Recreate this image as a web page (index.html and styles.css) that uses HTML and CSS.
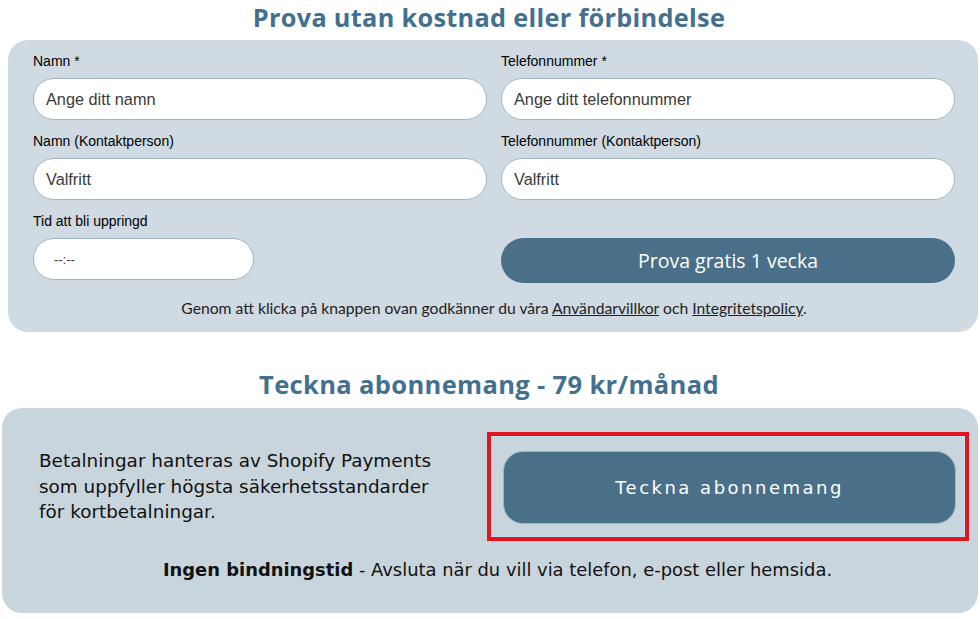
FILE: index.html
```html
<!DOCTYPE html>
<html lang="sv">
<head>
<meta charset="utf-8">
<title>Prova utan kostnad</title>
<link rel="stylesheet" href="styles.css">
</head>
<body>
<main class="page">
  <h2 class="title">Prova utan kostnad eller förbindelse</h2>
  <section class="card trial">
    <form class="form-grid">
      <div class="field">
        <label class="label">Namn *</label>
        <input class="input" type="text" placeholder="Ange ditt namn">
      </div>
      <div class="field">
        <label class="label">Telefonnummer *</label>
        <input class="input" type="text" placeholder="Ange ditt telefonnummer">
      </div>
      <div class="field">
        <label class="label">Namn (Kontaktperson)</label>
        <input class="input" type="text" placeholder="Valfritt">
      </div>
      <div class="field">
        <label class="label">Telefonnummer (Kontaktperson)</label>
        <input class="input" type="text" placeholder="Valfritt">
      </div>
      <div class="field">
        <label class="label">Tid att bli uppringd</label>
        <input class="input time" type="text" placeholder="--:--">
      </div>
      <div class="field field-button">
        <button class="btn-trial" type="button">Prova gratis 1 vecka</button>
      </div>
    </form>
    <p class="terms">Genom att klicka på knappen ovan godkänner du våra <a href="#">Användarvillkor</a> och <a href="#">Integritetspolicy</a>.</p>
  </section>

  <h2 class="title title-2">Teckna abonnemang - 79 kr/månad</h2>
  <section class="card subscribe">
    <div class="sub-row">
      <p class="sub-text">Betalningar hanteras av Shopify Payments som uppfyller högsta säkerhetsstandarder för kortbetalningar.</p>
      <div class="highlight">
        <button class="btn-sub" type="button">Teckna abonnemang</button>
      </div>
    </div>
    <p class="sub-note"><strong>Ingen bindningstid</strong> - Avsluta när du vill via telefon, e-post eller hemsida.</p>
  </section>
</main>
</body>
</html>
```

FILE: styles.css
```css
* { box-sizing: border-box; }

body {
  margin: 0;
  background: #ffffff;
  font-family: "Liberation Sans", Arial, sans-serif;
  color: #000;
}

.page {
  width: 980px;
  padding: 0 2px 0 0;
}

.title {
  margin: 0;
  height: 40px;
  padding-top: 0;
  text-align: center;
  font-family: "Open Sans", sans-serif;
  font-weight: 700;
  font-size: 25.3px;
  letter-spacing: 0.3px;
  line-height: 35px;
  color: #43708f;
}

.title-2 {
  margin-top: 35px;
  height: 41px;
  padding-top: 0;
  font-size: 25.5px;
  letter-spacing: 0.35px;
}

.card {
  border-radius: 20px;
}

.trial {
  margin-left: 8px;
  background: #cfdae2;
  padding: 13px 23px 14px 25px;
}

.form-grid {
  display: grid;
  grid-template-columns: 1fr 1fr;
  column-gap: 14px;
  row-gap: 13px;
}

.field {
  display: flex;
  flex-direction: column;
  align-items: flex-start;
}

.label {
  font-size: 14px;
  line-height: 16px;
  margin-bottom: 9px;
  color: #000;
}

.input {
  width: 100%;
  height: 42px;
  border: 1px solid #a3b4c2;
  border-radius: 21px;
  background: #fff;
  padding: 0 12px;
  font-family: "Liberation Sans", Arial, sans-serif;
  font-size: 16.3px;
  color: #333;
  outline: none;
}

.input::placeholder { color: #3a3a3a; opacity: 1; }

.time {
  width: 221px;
  padding-left: 20px;
  font-size: 13px;
}

.field-button {
  padding-top: 25px;
}

.btn-trial {
  width: 100%;
  height: 45px;
  border: 0;
  border-radius: 23px;
  background: #4a7089;
  color: #fff;
  font-family: "Open Sans", sans-serif;
  font-size: 19.5px;
  font-weight: 400;
  cursor: pointer;
}

.terms {
  margin: 15px 0 0;
  text-align: center;
  font-family: Lato, sans-serif;
  font-size: 15.7px;
  line-height: 20px;
  color: #222;
}

.terms a { color: #222; }

.subscribe {
  margin-left: 2px;
  background: #c9d5dd;
  padding: 24px 9px 31px 37px;
}

.sub-row {
  display: flex;
  align-items: center;
}

.sub-text {
  flex: 1;
  margin: 0;
  font-family: "DejaVu Sans", sans-serif;
  font-size: 18.4px;
  line-height: 25.5px;
  color: #111;
  padding-right: 30px;
}

.highlight {
  width: 482px;
  height: 109px;
  border: 4px solid #e3141d;
  box-shadow: inset 0 0 0 1px #bfe2ef;
  padding: 15px 9px 13px 12px;
}

.btn-sub {
  width: 100%;
  height: 100%;
  border: 1px solid #9fb6c6;
  border-radius: 20px;
  background: #4a7089;
  color: #fff;
  font-family: "DejaVu Sans", sans-serif;
  font-size: 18px;
  letter-spacing: 2.5px;
  cursor: pointer;
}

.sub-note {
  margin: 17px 0 0;
  padding-right: 13px;
  text-align: center;
  font-family: "DejaVu Sans", sans-serif;
  font-size: 17.9px;
  line-height: 24px;
  color: #111;
}

.sub-note strong { font-weight: 700; }
```
